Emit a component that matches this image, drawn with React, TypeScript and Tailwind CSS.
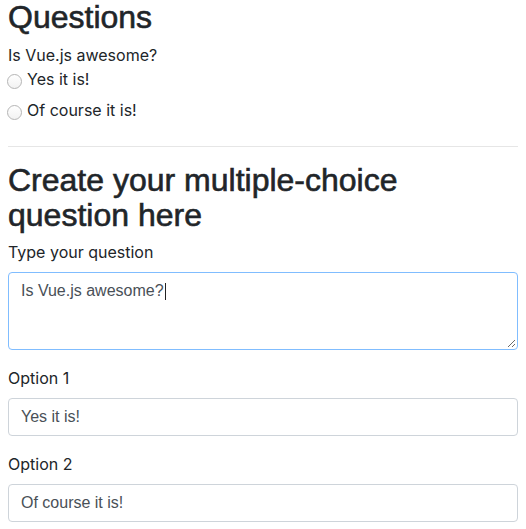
import { useState } from "react";

const body = "font-['Inter','Liberation_Sans',sans-serif]";
const field = "font-['Liberation_Sans',Arial,sans-serif]";
const heading = `${field} text-[32px] font-normal [-webkit-text-stroke:0.6px_#212529]`;

function Radio({ label }: { label: string }) {
  return (
    <label className="flex items-start h-6">
      <span className="mt-[7px] ml-[-1px] mr-[5px] h-[15px] w-[15px] shrink-0 rounded-full border border-[#b5b5b5] bg-gradient-to-b from-white to-[#f2f2f2]" />
      <span className="leading-6">{label}</span>
    </label>
  );
}

export default function App() {
  const [question, setQuestion] = useState("Is Vue.js awesome?");
  const [option1, setOption1] = useState("Yes it is!");
  const [option2, setOption2] = useState("Of course it is!");

  return (
    <div className={`${body} min-h-screen bg-white px-2 text-base text-[#212529]`}>
      <h1 className={`${heading} leading-[34px] mb-[9px]`}>Questions</h1>
      <p className="leading-6">{question}</p>
      <div className="flex flex-col gap-[7px]">
        <Radio label={option1} />
        <Radio label={option2} />
      </div>

      <hr className="mt-[24px] mb-4 border-0 border-t border-[#e6e6e6]" />

      <h2 className={`${heading} leading-[35px] mb-[7px]`}>
        Create your multiple-choice question here
      </h2>

      <div className="mb-4">
        <label className="block leading-6 mb-2">Type your question</label>
        <div className="relative">
          <div className={`${field} h-[78px] rounded border border-[#80bdff] px-3 py-1.5 leading-6 text-[#495057]`}>
            {question}
            <span className="ml-[1px] inline-block h-[17px] w-px align-[-4px] bg-[#222]" />
          </div>
          <svg className="absolute right-[2px] bottom-[2px]" width="9" height="9" viewBox="0 0 9 9">
            <path d="M1 8L8 1M5 8L8 5" stroke="#6b6b6b" strokeWidth="1" />
          </svg>
        </div>
      </div>

      <div className="mb-4">
        <label className="block leading-6 mb-2">Option 1</label>
        <input
          value={option1}
          onChange={(e) => setOption1(e.target.value)}
          className={`${field} block w-full h-[38px] rounded border border-[#ced4da] px-3 py-1.5 leading-6 text-[#495057] outline-none`}
        />
      </div>

      <div className="mb-4">
        <label className="block leading-6 mb-2">Option 2</label>
        <input
          value={option2}
          onChange={(e) => setOption2(e.target.value)}
          className={`${field} block w-full h-[38px] rounded border border-[#ced4da] px-3 py-1.5 leading-6 text-[#495057] outline-none`}
        />
      </div>
      <input type="hidden" value={question} onChange={(e) => setQuestion(e.target.value)} />
    </div>
  );
}
